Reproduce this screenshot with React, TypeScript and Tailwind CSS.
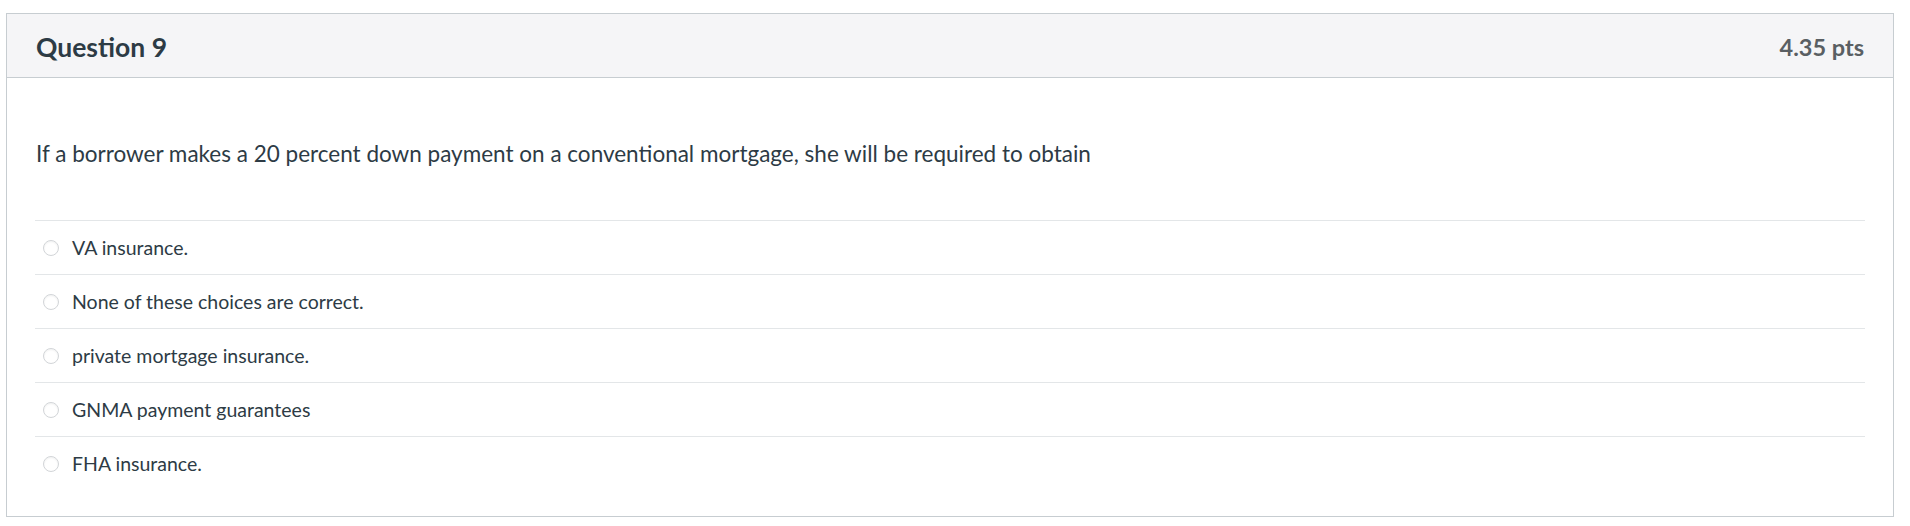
import React from 'react';

const options = [
  'VA insurance.',
  'None of these choices are correct.',
  'private mortgage insurance.',
  'GNMA payment guarantees',
  'FHA insurance.',
];

const App: React.FC = () => {
  return (
    <div className="min-h-screen bg-white pt-[13px] pl-[6px] pr-[16px]" style={{ fontFamily: 'Lato, "Noto Sans", sans-serif' }}>
      <div className="w-[1888px] border border-[#c7cdd1] bg-white">
        {/* Header */}
        <div className="h-[64px] flex items-center justify-between bg-[#f5f5f7] border-b border-[#c7cdd1] pl-[29px] pr-[29px] pt-[4px]">
          <h2 className="text-[26.5px] font-bold text-[#2d3b45] leading-none">Question 9</h2>
          <span className="text-[23.5px] font-bold text-[#5a5f63] leading-none">4.35 pts</span>
        </div>

        {/* Body */}
        <div className="px-[28px] pt-[60px] pb-[26px]">
          <p className="text-[22.5px] leading-[32px] text-[#2d3b45] pl-[1px]">
            If a borrower makes a 20 percent down payment on a conventional mortgage, she will be required to obtain
          </p>

          <div className="mt-[50px]">
            {options.map((opt) => (
              <div key={opt} className="h-[54px] border-t border-[#e3e6e8] flex items-center pl-[8px]">
                <span className="w-[16px] h-[16px] rounded-full border border-[#d2d5d8] bg-white shadow-[inset_0_1px_2px_rgba(0,0,0,0.06)] shrink-0"></span>
                <span className="ml-[13px] text-[19.5px] text-[#2d3b45]">{opt}</span>
              </div>
            ))}
          </div>
        </div>
      </div>
    </div>
  );
};

export default App;
